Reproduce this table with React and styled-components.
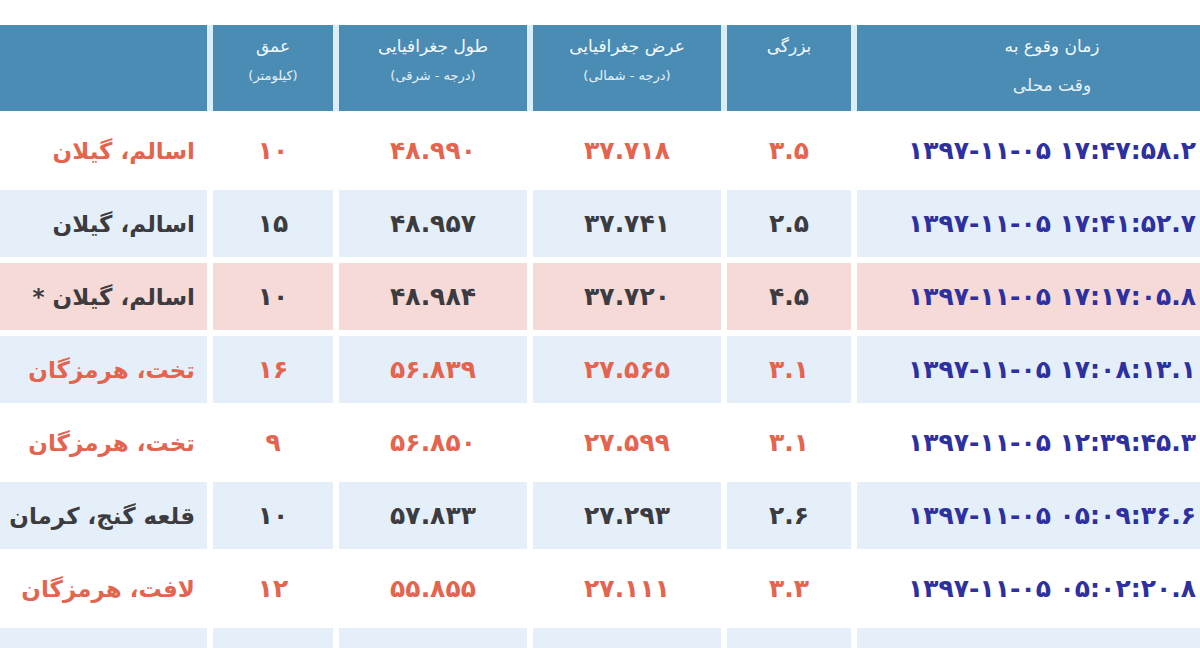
import React from "react";
import styled, { createGlobalStyle } from "styled-components";

const GlobalStyle = createGlobalStyle`
  html, body {
    margin: 0;
    padding: 0;
    background: #ffffff;
  }
  body {
    font-family: "DejaVu Sans", "Noto Sans", sans-serif;
  }
`;

const COLUMNS = "207px 120px 188px 188px 124px 390px";

const Page = styled.div`
  width: 1200px;
  height: 648px;
  padding-top: 25px;
  box-sizing: border-box;
  overflow: hidden;
  background: #ffffff;
`;

const Table = styled.div`
  width: 1243px;
  display: flex;
  flex-direction: column;
  gap: 6px;
`;

const Row = styled.div`
  display: grid;
  grid-template-columns: ${COLUMNS};
  column-gap: 6px;
  height: ${props => (props.head ? "86px" : "67px")};
  background: ${props => (props.head ? "#dbeef8" : "transparent")};
`;

const HeadCell = styled.div`
  background: #4b8cb4;
  color: #f4f9fc;
  direction: rtl;
  text-align: center;
  padding-top: 10px;
  font-size: 17px;
  line-height: 1.4;
`;

const HeadSub = styled.div`
  margin-top: ${props => (props.wide ? "15px" : "8px")};
  opacity: 0.92;
  font-size: ${props => (props.wide ? "17px" : "13px")};
`;

const tones = {
  white: "#ffffff",
  blue: "#e5eff9",
  pink: "#f6dad7"
};

const inks = {
  red: "#e4654f",
  dark: "#3b3b40"
};

const Cell = styled.div`
  background: ${props => tones[props.tone]};
  color: ${props => (props.time ? "#2e30a0" : inks[props.ink])};
  display: flex;
  align-items: center;
  justify-content: ${props => (props.place ? "flex-start" : "center")};
  padding-right: ${props => (props.place ? "12px" : "0")};
  direction: ${props => (props.time ? "ltr" : "rtl")};
  font-weight: bold;
  font-size: ${props => (props.place ? "23px" : "25px")};
  white-space: nowrap;
  overflow: hidden;
`;

const rows = [
  { tone: "white", ink: "red", place: "اسالم، گیلان", depth: "۱۰", lon: "۴۸.۹۹۰", lat: "۳۷.۷۱۸", mag: "۳.۵", time: "۱۳۹۷-۱۱-۰۵ ۱۷:۴۷:۵۸.۲" },
  { tone: "blue", ink: "dark", place: "اسالم، گیلان", depth: "۱۵", lon: "۴۸.۹۵۷", lat: "۳۷.۷۴۱", mag: "۲.۵", time: "۱۳۹۷-۱۱-۰۵ ۱۷:۴۱:۵۲.۷" },
  { tone: "pink", ink: "dark", place: "اسالم، گیلان *", depth: "۱۰", lon: "۴۸.۹۸۴", lat: "۳۷.۷۲۰", mag: "۴.۵", time: "۱۳۹۷-۱۱-۰۵ ۱۷:۱۷:۰۵.۸" },
  { tone: "blue", ink: "red", place: "تخت، هرمزگان", depth: "۱۶", lon: "۵۶.۸۳۹", lat: "۲۷.۵۶۵", mag: "۳.۱", time: "۱۳۹۷-۱۱-۰۵ ۱۷:۰۸:۱۳.۱" },
  { tone: "white", ink: "red", place: "تخت، هرمزگان", depth: "۹", lon: "۵۶.۸۵۰", lat: "۲۷.۵۹۹", mag: "۳.۱", time: "۱۳۹۷-۱۱-۰۵ ۱۲:۳۹:۴۵.۳" },
  { tone: "blue", ink: "dark", place: "قلعه گنج، کرمان", depth: "۱۰", lon: "۵۷.۸۳۳", lat: "۲۷.۲۹۳", mag: "۲.۶", time: "۱۳۹۷-۱۱-۰۵ ۰۵:۰۹:۳۶.۶" },
  { tone: "white", ink: "red", place: "لافت، هرمزگان", depth: "۱۲", lon: "۵۵.۸۵۵", lat: "۲۷.۱۱۱", mag: "۳.۳", time: "۱۳۹۷-۱۱-۰۵ ۰۵:۰۲:۲۰.۸" },
  { tone: "blue", ink: "dark", place: "", depth: "", lon: "", lat: "", mag: "", time: "" }
];

const App = () => (
  <Page>
    <GlobalStyle />
    <Table>
      <Row head>
        <HeadCell />
        <HeadCell>
          عمق
          <HeadSub>(کیلومتر)</HeadSub>
        </HeadCell>
        <HeadCell>
          طول جغرافیایی
          <HeadSub>(درجه - شرقی)</HeadSub>
        </HeadCell>
        <HeadCell>
          عرض جغرافیایی
          <HeadSub>(درجه - شمالی)</HeadSub>
        </HeadCell>
        <HeadCell>بزرگی</HeadCell>
        <HeadCell>
          زمان وقوع به
          <HeadSub wide>وقت محلی</HeadSub>
        </HeadCell>
      </Row>
      {rows.map((r, i) => (
        <Row key={i}>
          <Cell tone={r.tone} ink={r.ink} place>
            {r.place}
          </Cell>
          <Cell tone={r.tone} ink={r.ink}>{r.depth}</Cell>
          <Cell tone={r.tone} ink={r.ink}>{r.lon}</Cell>
          <Cell tone={r.tone} ink={r.ink}>{r.lat}</Cell>
          <Cell tone={r.tone} ink={r.ink}>{r.mag}</Cell>
          <Cell tone={r.tone} ink={r.ink} time>
            {r.time}
          </Cell>
        </Row>
      ))}
    </Table>
  </Page>
);

export default App;
